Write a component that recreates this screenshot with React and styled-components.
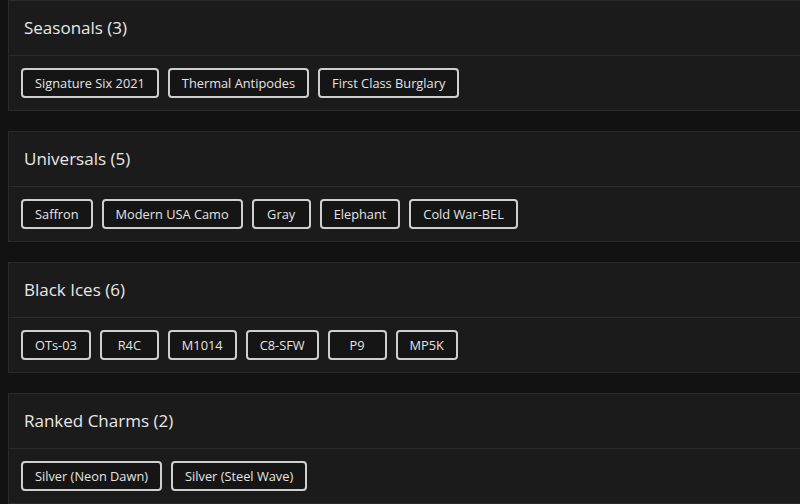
import React from "react";
import styled, { createGlobalStyle } from "styled-components";

const sections = [
  { title: "Seasonals", items: ["Signature Six 2021", "Thermal Antipodes", "First Class Burglary"] },
  { title: "Universals", items: ["Saffron", "Modern USA Camo", "Gray", "Elephant", "Cold War-BEL"] },
  { title: "Black Ices", items: ["OTs-03", "R4C", "M1014", "C8-SFW", "P9", "MP5K"] },
  { title: "Ranked Charms", items: ["Silver (Neon Dawn)", "Silver (Steel Wave)"] },
];

const App = () => {
  return (
    <Page>
      <GlobalStyle />
      {sections.map((s) => (
        <Card key={s.title}>
          <CardHeader>
            <Title>
              {s.title} ({s.items.length})
            </Title>
          </CardHeader>
          <CardBody>
            {s.items.map((item) => (
              <Chip key={item}>{item}</Chip>
            ))}
          </CardBody>
        </Card>
      ))}
    </Page>
  );
};

const GlobalStyle = createGlobalStyle`
  html, body {
    margin: 0;
    background-color: #121212;
    overflow: hidden;
  }
  body {
    font-family: "Open Sans", "Noto Sans", sans-serif;
  }
`;

const Page = styled.div`
  display: flex;
  flex-direction: column;
  gap: 20px;
  padding: 0 0 0 8px;
`;

const Card = styled.div`
  background-color: #1b1b1b;
  border: 1px solid #2a2a2a;
  border-right: none;
`;

const CardHeader = styled.div`
  box-sizing: border-box;
  display: flex;
  align-items: center;
  height: 55px;
  padding: 0 15px 2px;
  border-bottom: 1px solid #2c2c2c;
`;

const Title = styled.h2`
  margin: 0;
  font-size: 17px;
  font-weight: 500;
  color: #e8e8e8;
`;

const CardBody = styled.div`
  display: flex;
  flex-wrap: wrap;
  gap: 9px;
  padding: 12px 12px;
`;

const Chip = styled.div`
  box-sizing: border-box;
  height: 30px;
  min-width: 59px;
  display: flex;
  align-items: center;
  justify-content: center;
  padding: 0 12px;
  border: 2px solid #cfcfcf;
  border-radius: 4px;
  background-color: #151515;
  color: #e4e4e4;
  font-size: 12.8px;
  white-space: nowrap;
`;

export default App;
